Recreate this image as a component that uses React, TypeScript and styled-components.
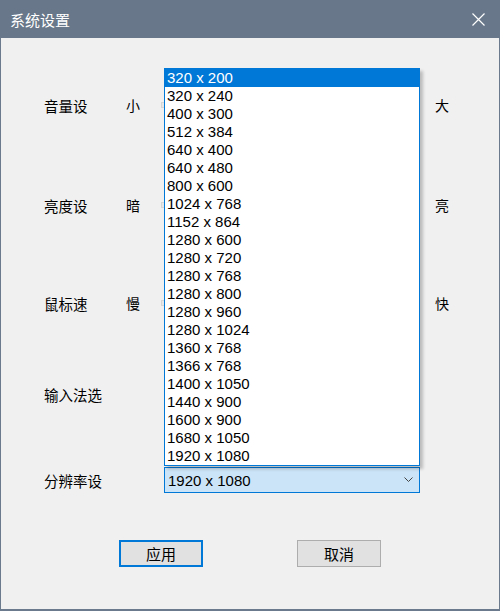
import React from "react";
import styled, { createGlobalStyle } from "styled-components";

const GlobalStyle = createGlobalStyle`
  html, body {
    margin: 0;
    padding: 0;
    background: #f0f0f0;
  }
`;

const cjk = `"Noto Sans CJK SC", "Noto Sans", sans-serif`;

const Window = styled.div`
  width: 500px;
  height: 611px;
  box-sizing: border-box;
  border: 1px solid #6b7a8c;
  border-top: none;
  border-bottom-width: 2px;
  background: #f0f0f0;
  display: flex;
  flex-direction: column;
  font-family: ${cjk};
  color: #000;
`;

const TitleBar = styled.div`
  height: 38px;
  flex: none;
  background: #687789;
  margin: 0 -1px;
  display: flex;
  align-items: center;
  justify-content: space-between;
  padding: 0 15px 0 10px;
  color: #fff;
  font-size: 15px;
`;

const CloseBtn = styled.svg`
  width: 13px;
  height: 13px;
  display: block;
`;

const Form = styled.div`
  display: flex;
  flex-direction: column;
  padding-top: 54px;
`;

const Row = styled.div<{ $mt?: number }>`
  display: grid;
  grid-template-columns: 81px 39px 256px 1fr;
  align-items: center;
  height: 26px;
  padding-left: 43px;
  margin-top: ${(p) => p.$mt ?? 0}px;
`;

const Label = styled.span`
  font-size: 14.5px;
  white-space: nowrap;
`;

const SideLabel = styled.span<{ $right?: boolean }>`
  font-size: 14px;
  padding-left: ${(p) => (p.$right ? 15 : 1)}px;
`;

const Track = styled.div`
  height: 4px;
  margin-left: -3px;
  background: #e7e7e7;
  border: 1px solid #d6d6d6;
`;

const ComboWrap = styled.div`
  position: relative;
  height: 26px;
`;

const Combo = styled.div<{ $active?: boolean }>`
  height: 26px;
  box-sizing: border-box;
  border: 1px solid ${(p) => (p.$active ? "#0078d7" : "#adadad")};
  background: ${(p) => (p.$active ? "#cce4f7" : "#e1e1e1")};
  display: flex;
  align-items: center;
  justify-content: space-between;
  padding: 0 6px 0 3px;
  font-family: "Liberation Sans", Arial, sans-serif;
  font-size: 15px;
`;

const Chevron = styled.svg`
  width: 9px;
  height: 6px;
  display: block;
`;

const List = styled.ul`
  position: absolute;
  left: 0;
  right: 0;
  bottom: calc(100% + 1px);
  margin: 0;
  padding: 0;
  list-style: none;
  background: #fff;
  border: 1px solid #0078d7;
  box-shadow: 3px 3px 3px rgba(0, 0, 0, 0.22);
  z-index: 10;
  font-family: "Liberation Sans", Arial, sans-serif;
  font-size: 15px;
`;

const Item = styled.li<{ $selected?: boolean }>`
  height: 18px;
  line-height: 18px;
  padding-left: 2px;
  background: ${(p) => (p.$selected ? "#0078d7" : "transparent")};
  color: ${(p) => (p.$selected ? "#fff" : "#000")};
`;

const Buttons = styled.div`
  display: flex;
  padding-left: 118px;
  gap: 94px;
  margin-top: 47px;
`;

const Button = styled.button<{ $default?: boolean }>`
  width: 84px;
  height: 27px;
  box-sizing: border-box;
  background: #e1e1e1;
  border: ${(p) => (p.$default ? "2px solid #0078d7" : "1px solid #adadad")};
  font-family: ${cjk};
  font-size: 15px;
  color: #000;
  padding: 0;
`;

const resolutions = [
  "320 x 200",
  "320 x 240",
  "400 x 300",
  "512 x 384",
  "640 x 400",
  "640 x 480",
  "800 x 600",
  "1024 x 768",
  "1152 x 864",
  "1280 x 600",
  "1280 x 720",
  "1280 x 768",
  "1280 x 800",
  "1280 x 960",
  "1280 x 1024",
  "1360 x 768",
  "1366 x 768",
  "1400 x 1050",
  "1440 x 900",
  "1600 x 900",
  "1680 x 1050",
  "1920 x 1080",
];

const sliders = [
  { label: "音量设", min: "小", max: "大", mt: 0 },
  { label: "亮度设", min: "暗", max: "亮", mt: 74 },
  { label: "鼠标速", min: "慢", max: "快", mt: 72 },
];

export default function App() {
  return (
    <>
      <GlobalStyle />
      <Window>
        <TitleBar>
          <span>系统设置</span>
          <CloseBtn viewBox="0 0 13 13">
            <path d="M0.5 0.5 L12.5 12.5 M12.5 0.5 L0.5 12.5" stroke="#fff" strokeWidth="1.2" />
          </CloseBtn>
        </TitleBar>
        <Form>
          {sliders.map((s) => (
            <Row key={s.label} $mt={s.mt}>
              <Label>{s.label}</Label>
              <SideLabel>{s.min}</SideLabel>
              <Track />
              <SideLabel $right>{s.max}</SideLabel>
            </Row>
          ))}
          <Row $mt={65}>
            <Label>输入法选</Label>
            <span />
            <ComboWrap>
              <Combo />
            </ComboWrap>
          </Row>
          <Row $mt={60}>
            <Label>分辨率设</Label>
            <span />
            <ComboWrap>
              <List>
                {resolutions.map((r, i) => (
                  <Item key={r} $selected={i === 0}>
                    {r}
                  </Item>
                ))}
              </List>
              <Combo $active>
                <span>1920 x 1080</span>
                <Chevron viewBox="0 0 9 6">
                  <path d="M0.5 0.5 L4.5 4.5 L8.5 0.5" fill="none" stroke="#444" strokeWidth="1" />
                </Chevron>
              </Combo>
            </ComboWrap>
          </Row>
          <Buttons>
            <Button $default>应用</Button>
            <Button>取消</Button>
          </Buttons>
        </Form>
      </Window>
    </>
  );
}
